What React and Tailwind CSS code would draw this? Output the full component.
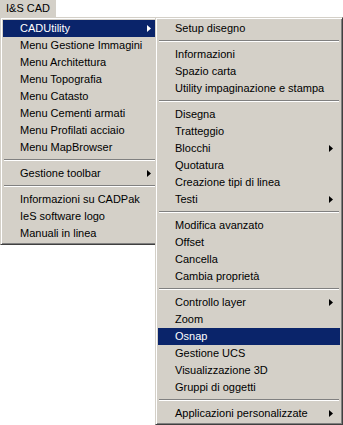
import React from 'react';

const SEP = '-';

const mainItems = [
  { label: 'CADUtility', sub: true, active: true },
  { label: 'Menu Gestione Immagini' },
  { label: 'Menu Architettura' },
  { label: 'Menu Topografia' },
  { label: 'Menu Catasto' },
  { label: 'Menu Cementi armati' },
  { label: 'Menu Profilati acciaio' },
  { label: 'Menu MapBrowser' },
  SEP,
  { label: 'Gestione toolbar', sub: true },
  SEP,
  { label: 'Informazioni su CADPak' },
  { label: 'IeS software logo' },
  { label: 'Manuali in linea' },
];

const utilityItems = [
  { label: 'Setup disegno' },
  SEP,
  { label: 'Informazioni' },
  { label: 'Spazio carta' },
  { label: 'Utility impaginazione e stampa' },
  SEP,
  { label: 'Disegna' },
  { label: 'Tratteggio' },
  { label: 'Blocchi', sub: true },
  { label: 'Quotatura' },
  { label: 'Creazione tipi di linea' },
  { label: 'Testi', sub: true },
  SEP,
  { label: 'Modifica avanzato' },
  { label: 'Offset' },
  { label: 'Cancella' },
  { label: 'Cambia proprietà' },
  SEP,
  { label: 'Controllo layer', sub: true },
  { label: 'Zoom' },
  { label: 'Osnap', active: true },
  { label: 'Gestione UCS' },
  { label: 'Visualizzazione 3D' },
  { label: 'Gruppi di oggetti' },
  SEP,
  { label: 'Applicazioni personalizzate', sub: true },
];

function Arrow({ white }) {
  return (
    <svg width="4" height="7" viewBox="0 0 4 7" className="absolute right-[7px] top-[5px]">
      <polygon points="0,0 4,3.5 0,7" fill={white ? '#ffffff' : '#000000'} />
    </svg>
  );
}

function Menu({ items, className }) {
  return (
    <div
      className={`absolute bg-[#d4d0c8] border border-t-[#d4d0c8] border-l-[#d4d0c8] border-b-[#404040] border-r-[#404040] p-[2px] shadow-[inset_1px_1px_0_#ffffff,inset_-1px_-1px_0_#808080] ${className}`}
    >
      {items.map((item, idx) =>
        item === SEP ? (
          <div key={idx} className="h-[9px] pt-[3px] px-px">
            <div className="h-[2px] border-t border-t-[#808080] border-b border-b-white" />
          </div>
        ) : (
          <div
            key={idx}
            className={`relative h-[17px] leading-[17px] pl-[17px] whitespace-nowrap ${
              item.active ? 'bg-[#0a246a] text-white' : 'text-black'
            }`}
          >
            {item.label}
            {item.sub && <Arrow white={item.active} />}
          </div>
        )
      )}
    </div>
  );
}

export default function App() {
  return (
    <div className="relative w-[343px] h-[425px] bg-white overflow-hidden font-['Tahoma','Liberation_Sans',sans-serif] text-[11px]">
      <div className="h-[17px] w-[56px] bg-[#d4d0c8] pl-[6px] leading-[17px] text-black">I&amp;S CAD</div>
      <Menu items={mainItems} className="left-0 top-[17px] w-[161px]" />
      <Menu items={utilityItems} className="left-[155px] top-[17px] w-[188px]" />
    </div>
  );
}
